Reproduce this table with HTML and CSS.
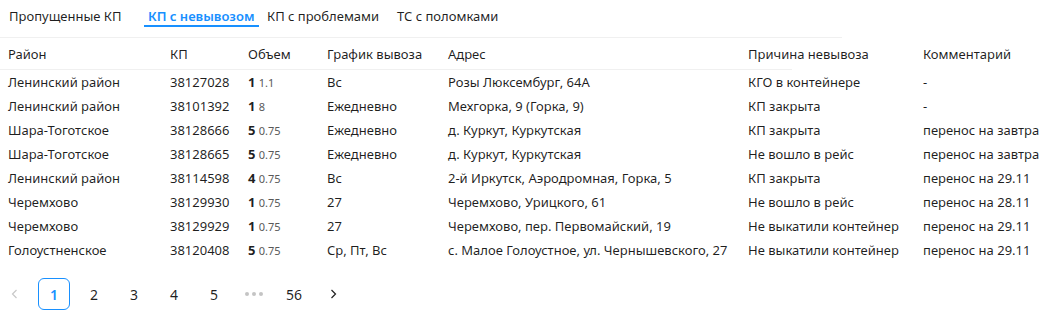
FILE: index.html
```html
<!DOCTYPE html>
<html lang="ru">
<head>
<meta charset="utf-8">
<link rel="stylesheet" href="styles.css">
</head>
<body>
<nav class="tabs">
  <div class="tab t1">Пропущенные КП</div>
  <div class="tab t2 active">КП с невывозом</div>
  <div class="tab t3">КП с проблемами</div>
  <div class="tab t4">ТС с поломками</div>
</nav>
<table class="grid">
  <colgroup>
    <col class="c1"><col class="c2"><col class="c3"><col class="c4"><col class="c5"><col class="c6"><col class="c7">
  </colgroup>
  <thead>
    <tr><th>Район</th><th>КП</th><th>Объем</th><th>График вывоза</th><th>Адрес</th><th class="partial">Причина невывоза</th><th class="noline">Комментарий</th></tr>
  </thead>
  <tbody>
    <tr><td>Ленинский район</td><td>38127028</td><td><b>1</b> <span class="vol">1.1</span></td><td>Вс</td><td>Розы Люксембург, 64А</td><td>КГО в контейнере</td><td>-</td></tr>
    <tr><td>Ленинский район</td><td>38101392</td><td><b>1</b> <span class="vol">8</span></td><td>Ежедневно</td><td>Мехгорка, 9 (Горка, 9)</td><td>КП закрыта</td><td>-</td></tr>
    <tr><td>Шара-Тоготское</td><td>38128666</td><td><b>5</b> <span class="vol">0.75</span></td><td>Ежедневно</td><td>д. Куркут, Куркутская</td><td>КП закрыта</td><td>перенос на завтра</td></tr>
    <tr><td>Шара-Тоготское</td><td>38128665</td><td><b>5</b> <span class="vol">0.75</span></td><td>Ежедневно</td><td>д. Куркут, Куркутская</td><td>Не вошло в рейс</td><td>перенос на завтра</td></tr>
    <tr><td>Ленинский район</td><td>38114598</td><td><b>4</b> <span class="vol">0.75</span></td><td>Вс</td><td>2-й Иркутск, Аэродромная, Горка, 5</td><td>КП закрыта</td><td>перенос на 29.11</td></tr>
    <tr><td>Черемхово</td><td>38129930</td><td><b>1</b> <span class="vol">0.75</span></td><td>27</td><td>Черемхово, Урицкого, 61</td><td>Не вошло в рейс</td><td>перенос на 28.11</td></tr>
    <tr><td>Черемхово</td><td>38129929</td><td><b>1</b> <span class="vol">0.75</span></td><td>27</td><td>Черемхово, пер. Первомайский, 19</td><td>Не выкатили контейнер</td><td>перенос на 29.11</td></tr>
    <tr><td>Голоустненское</td><td>38120408</td><td><b>5</b> <span class="vol">0.75</span></td><td>Ср, Пт, Вс</td><td>с. Малое Голоустное, ул. Чернышевского, 27</td><td>Не выкатили контейнер</td><td>перенос на 29.11</td></tr>
  </tbody>
</table>
<ul class="pager">
  <li class="pg arrow disabled"><svg width="12" height="12" viewBox="0 0 12 12"><path d="M7.5 2 L3.5 6 L7.5 10" fill="none" stroke="currentColor" stroke-width="1.2"/></svg></li>
  <li class="pg current">1</li>
  <li class="pg">2</li>
  <li class="pg">3</li>
  <li class="pg">4</li>
  <li class="pg">5</li>
  <li class="pg dots"><span></span><span></span><span></span></li>
  <li class="pg">56</li>
  <li class="pg arrow"><svg width="12" height="12" viewBox="0 0 12 12"><path d="M4.5 2 L8.5 6 L4.5 10" fill="none" stroke="currentColor" stroke-width="1.2"/></svg></li>
</ul>
</body>
</html>
```
FILE: styles.css
```css
* { box-sizing: border-box; }
body {
  margin: 0;
  font-family: "Noto Sans", "Open Sans", sans-serif;
  font-size: 13px;
  color: rgba(0,0,0,0.88);
  background: #fff;
}
.tabs {
  display: flex;
  width: 842px;
  height: 38px;
  border-bottom: 1px solid #f0f0f0;
  padding-top: 7px;
}
.tab {
  line-height: 18px;
  height: 20px;
  white-space: nowrap;
}
.t1 { margin-left: 9px; width: 135px; }
.t2 { width: 115px; padding: 0 4px; }
.t3 { margin-left: 8px; width: 130px; }
.t4 { width: 110px; }
.tab.active {
  color: #1890ff;
  font-weight: 600;
  border-bottom: 2px solid #1890ff;
}
.grid {
  border-collapse: collapse;
  table-layout: fixed;
  width: 1049px;
}
.c1 { width: 162px; }
.c2 { width: 78px; }
.c3 { width: 79px; }
.c4 { width: 121px; }
.c5 { width: 300px; }
.c6 { width: 175px; }
.c7 { width: 134px; }
.grid th {
  font-weight: 400;
  text-align: left;
  padding: 6px 8px 5px;
  line-height: 20px;
  border-bottom: 1px solid #f0f0f0;
  white-space: nowrap;
}
.grid th.partial {
  border-bottom: none;
  background: linear-gradient(#f0f0f0, #f0f0f0) left bottom / 52px 1px no-repeat;
}
.grid th.noline { border-bottom: none; }
.grid td {
  padding: 2px 8px;
  height: 24px;
  line-height: 20px;
  white-space: nowrap;
  overflow: visible;
}
.grid td b { font-weight: 700; line-height: 1; }
.vol {
  font-size: 11px;
  line-height: 1;
  color: #595959;
}
.pager {
  list-style: none;
  margin: 16px 0 0;
  padding: 0;
  display: flex;
}
.pg {
  width: 32px;
  height: 32px;
  margin-right: 8px;
  display: flex;
  align-items: center;
  justify-content: center;
  font-size: 14px;
  border: 1px solid transparent;
  border-radius: 6px;
}
.pg.arrow { width: 30px; }
.pg.arrow.disabled { color: #c8c8c8; }
.pg.current {
  border-color: #1890ff;
  color: #1890ff;
  font-weight: 600;
}
.pg.dots { gap: 3px; }
.pg.dots span {
  width: 4px;
  height: 4px;
  border-radius: 50%;
  background: #c4c4c4;
}
```
